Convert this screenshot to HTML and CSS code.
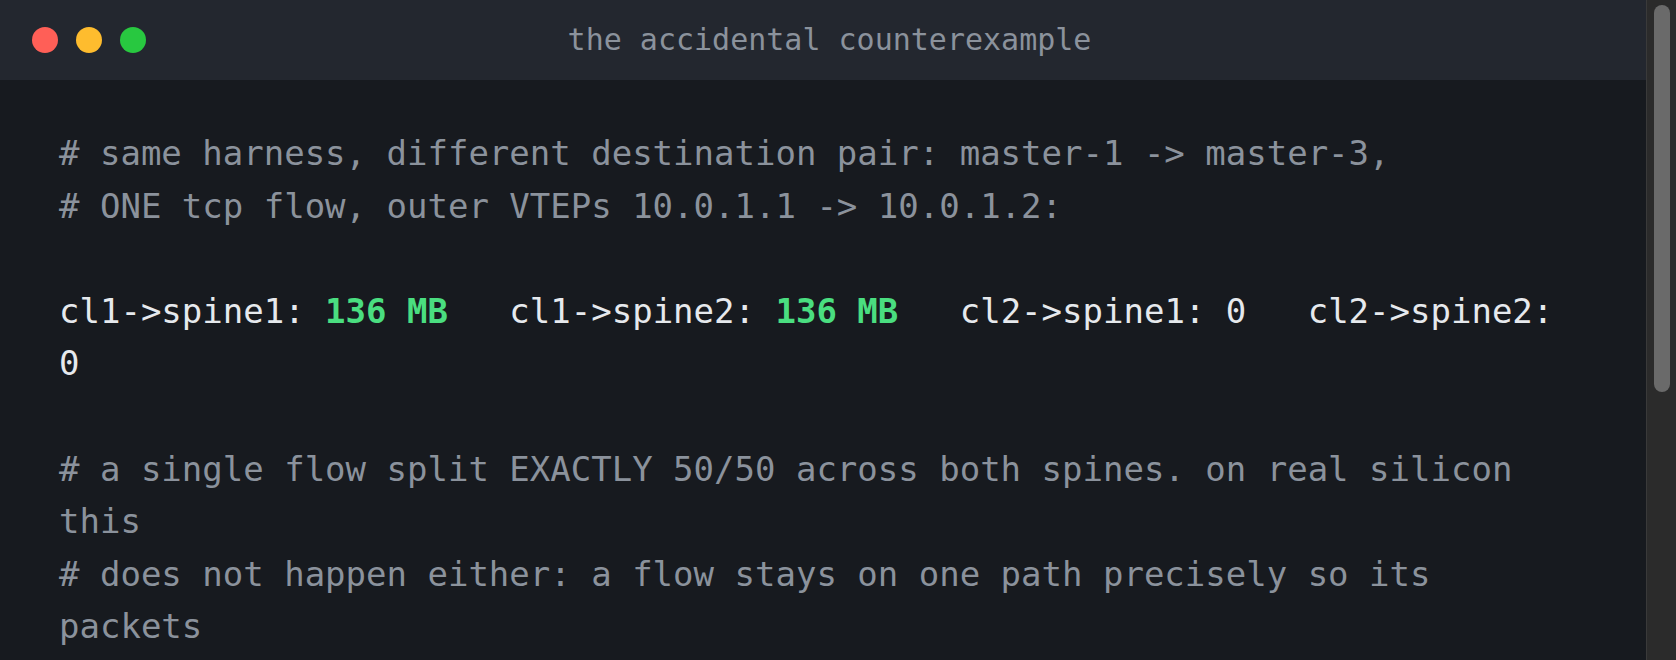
FILE: index.html
```html
<!DOCTYPE html>
<html>
<head>
<meta charset="utf-8">
<link rel="stylesheet" href="styles.css">
</head>
<body>
<div class="screen">
  <div class="window">
    <div class="titlebar">
      <div class="lights">
        <span class="light red"></span>
        <span class="light yellow"></span>
        <span class="light green"></span>
      </div>
      <div class="title">the accidental counterexample</div>
    </div>
    <div class="content">
<pre class="code"><span class="cm"># same harness, different destination pair: master-1 -&gt; master-3,
# ONE tcp flow, outer VTEPs 10.0.1.1 -&gt; 10.0.1.2:</span>

<span class="tx">cl1-&gt;spine1: <b class="hi">136 MB</b>   cl1-&gt;spine2: <b class="hi">136 MB</b>   cl2-&gt;spine1: 0   cl2-&gt;spine2: 0</span>

<span class="cm"># a single flow split EXACTLY 50/50 across both spines. on real silicon this
# does not happen either: a flow stays on one path precisely so its packets</span></pre>
    </div>
  </div>
  <div class="rail"><div class="thumb"></div></div>
</div>
</body>
</html>
```
FILE: styles.css
```css
html, body {
  margin: 0;
  padding: 0;
  background: #171a1f;
  overflow: hidden;
}
.screen {
  display: flex;
  width: 1676px;
  height: 660px;
}
.window {
  flex: 1;
  display: flex;
  flex-direction: column;
  background: #171a1f;
  min-width: 0;
}
.titlebar {
  position: relative;
  height: 80px;
  flex: none;
  background: #23272f;
  display: flex;
  align-items: center;
}
.lights {
  position: absolute;
  left: 32px;
  top: 27px;
  display: flex;
  gap: 18px;
}
.light {
  width: 26px;
  height: 26px;
  border-radius: 50%;
  display: block;
}
.red { background: #ff5f57; }
.yellow { background: #febc2e; }
.green { background: #28c840; }
.title {
  flex: 1;
  text-align: center;
  padding-left: 13px;
  font-family: "DejaVu Sans Mono", monospace;
  font-size: 30px;
  line-height: 80px;
  color: #8b929c;
}
.content {
  flex: 1;
  overflow: hidden;
  padding: 47px 60px 0 59px;
}
.code {
  margin: 0;
  font-family: "DejaVu Sans Mono", monospace;
  font-size: 34px;
  line-height: 52.6px;
  white-space: pre-wrap;
  color: #e6e9ed;
}
.cm { color: #8b929c; }
.tx { color: #e6e9ed; }
.hi { color: #4ade80; font-weight: bold; }
.rail {
  width: 29px;
  flex: none;
  background: #2b2b2b;
  border-left: 1px solid #3a3a3a;
  padding-top: 5px;
  box-sizing: content-box;
}
.thumb {
  width: 16px;
  height: 387px;
  margin-left: 7px;
  background: #6a6a6a;
  border-radius: 8px;
}
```
